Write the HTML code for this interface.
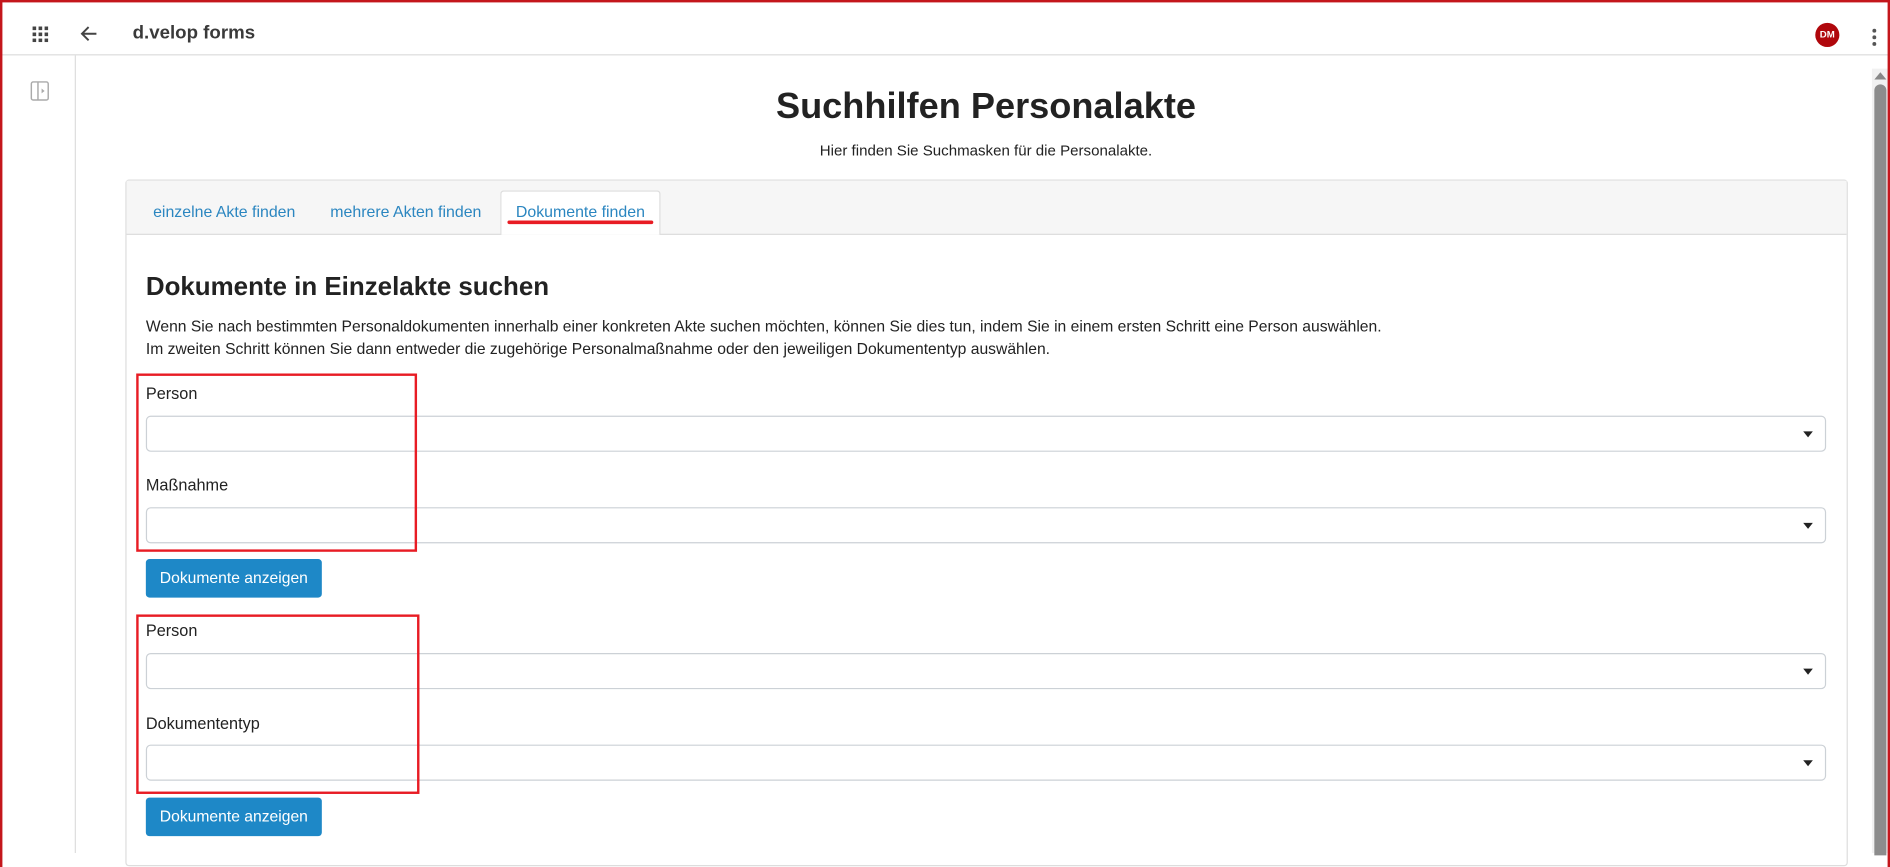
<!DOCTYPE html>
<html><head><meta charset="utf-8">
<style>
html,body{margin:0;padding:0;width:1890px;height:853px;overflow:hidden;background:#fff;}
#w{position:absolute;left:0;top:0;width:1568px;height:708px;transform:scale(1.20536,1.2048);transform-origin:0 0;font-family:"Liberation Sans",Arial,sans-serif;color:#222;}
.a{position:absolute;}
#frame{left:0;top:0;width:1568px;height:720px;border:2px solid #c4161c;border-bottom:none;box-sizing:border-box;}
#hdr{left:0;top:0;width:1568px;height:46px;border-bottom:1px solid #ddd;box-sizing:border-box;}
#side{left:0;top:46px;width:63px;height:662px;border-right:1px solid #ddd;box-sizing:border-box;}
.tab{position:absolute;top:168px;font-size:13.2px;color:#2b86c0;}
.lbl{position:absolute;left:121px;font-size:13.5px;color:#222;}
.sel{position:absolute;left:121px;width:1394px;height:30px;border:1px solid #ccd1d6;border-radius:4px;box-sizing:border-box;background:#fff;}
.sel:after{content:"";position:absolute;right:10px;top:12px;border-left:4.5px solid transparent;border-right:4.5px solid transparent;border-top:5px solid #222;}
.btn{position:absolute;left:121px;width:146px;height:32px;background:#1e88c7;border-radius:3px;color:#fff;font-size:13px;line-height:32px;text-align:center;}
.rb{position:absolute;border:2px solid #e81c24;box-sizing:border-box;}
</style></head><body>
<div id="w">
<div class="a" id="hdr"></div>
<svg class="a" style="left:27px;top:22px" width="13" height="13" viewBox="0 0 13 13" fill="#444">
<rect x="0" y="0" width="3" height="3"/><rect x="5" y="0" width="3" height="3"/><rect x="10" y="0" width="3" height="3"/>
<rect x="0" y="5" width="3" height="3"/><rect x="5" y="5" width="3" height="3"/><rect x="10" y="5" width="3" height="3"/>
<rect x="0" y="10" width="3" height="3"/><rect x="5" y="10" width="3" height="3"/><rect x="10" y="10" width="3" height="3"/></svg>
<svg class="a" style="left:66px;top:21px" width="15" height="14" viewBox="0 0 15 14" fill="none" stroke="#444" stroke-width="1.6"><path d="M14 7H2M7.5 1.5L2 7l5.5 5.5"/></svg>
<div class="a" style="left:110px;top:19px;font-size:15.5px;color:#3a3a3a;font-weight:bold">d.velop forms</div>
<div class="a" style="left:1506px;top:19px;width:20px;height:20px;border-radius:50%;background:#b0070c;color:#fff;font-size:8px;font-weight:bold;text-align:center;line-height:20px">DM</div>
<svg class="a" style="left:1552px;top:23px" width="6" height="16" fill="#555"><circle cx="3" cy="2.5" r="1.6"/><circle cx="3" cy="8" r="1.6"/><circle cx="3" cy="13.5" r="1.6"/></svg>
<div class="a" id="side"></div>
<svg class="a" style="left:25px;top:67px" width="17" height="17" viewBox="0 0 17 17" fill="none" stroke="#aaa" stroke-width="1.2"><rect x="1" y="1" width="14" height="15" rx="1.5"/><path d="M6.5 1v15"/><path d="M9.5 6.5l2.5 2-2.5 2z" fill="#aaa" stroke="none"/></svg>
<div class="a" style="left:1553px;top:57px;width:15px;height:651px;background:#f1f1f1"></div>
<div class="a" style="left:1555px;top:60px;width:0;height:0;border-left:5px solid transparent;border-right:5px solid transparent;border-bottom:6px solid #888"></div>
<div class="a" style="left:1555px;top:70px;width:10px;height:640px;background:#8c8c8c;border-radius:5px 5px 0 0"></div>

<div class="a" style="left:63px;top:72px;width:1510px;text-align:center;font-size:30px;font-weight:bold;color:#222">Suchhilfen Personalakte</div>
<div class="a" style="left:63px;top:118px;width:1510px;text-align:center;font-size:12.5px;color:#222">Hier finden Sie Suchmasken für die Personalakte.</div>

<div class="a" style="left:104px;top:149px;width:1429px;height:570px;border:1px solid #ddd;border-radius:3px;box-sizing:border-box"></div>
<div class="a" style="left:105px;top:150px;width:1427px;height:44px;background:#f6f6f6;border-bottom:1px solid #ddd"></div>
<div class="a" style="left:415px;top:158px;width:133px;height:37px;background:#fff;border:1px solid #ddd;border-bottom:none;border-radius:3px 3px 0 0;box-sizing:border-box"></div>
<div class="tab" style="left:127px">einzelne Akte finden</div>
<div class="tab" style="left:274px">mehrere Akten finden</div>
<div class="tab" style="left:428px">Dokumente finden</div>
<div class="a" style="left:421px;top:183px;width:121px;height:3px;background:#e81c24;border-radius:2px"></div>

<div class="a" style="left:121px;top:226px;font-size:21.5px;font-weight:bold;color:#222">Dokumente in Einzelakte suchen</div>
<div class="a" style="left:121px;top:261px;font-size:13px;line-height:19px;color:#222">Wenn Sie nach bestimmten Personaldokumenten innerhalb einer konkreten Akte suchen möchten, können Sie dies tun, indem Sie in einem ersten Schritt eine Person auswählen.<br>Im zweiten Schritt können Sie dann entweder die zugehörige Personalmaßnahme oder den jeweiligen Dokumententyp auswählen.</div>

<div class="lbl" style="top:319px">Person</div>
<div class="sel" style="top:345px"></div>
<div class="lbl" style="top:395px">Maßnahme</div>
<div class="sel" style="top:421px"></div>
<div class="btn" style="top:464px">Dokumente anzeigen</div>
<div class="rb" style="left:113px;top:310px;width:233px;height:148px"></div>

<div class="lbl" style="top:516px">Person</div>
<div class="sel" style="top:542px"></div>
<div class="lbl" style="top:593px">Dokumententyp</div>
<div class="sel" style="top:618px"></div>
<div class="btn" style="top:662px">Dokumente anzeigen</div>
<div class="rb" style="left:113px;top:510px;width:235px;height:149px"></div>

<div class="a" id="frame"></div>
</div>
</body></html>
